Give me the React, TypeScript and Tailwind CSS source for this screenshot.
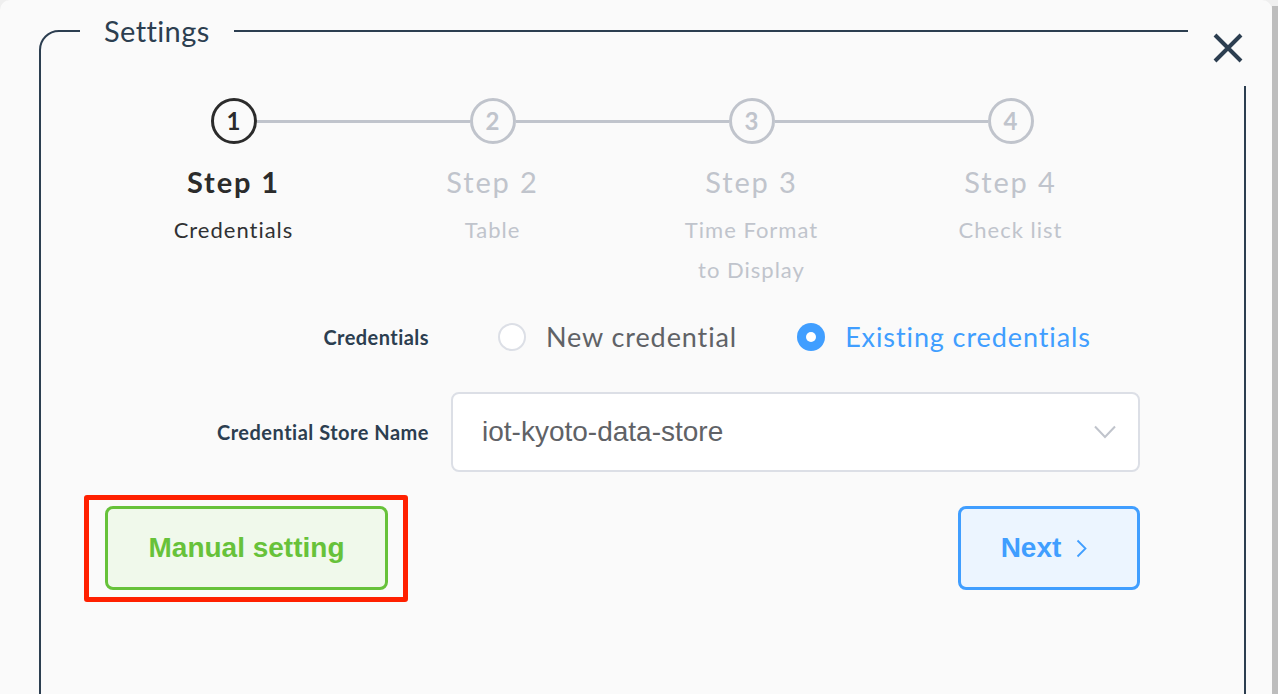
import React, { useState } from 'react';

type Step = { no: number; title: string; desc: string[] };

const steps: Step[] = [
  { no: 1, title: 'Step 1', desc: ['Credentials'] },
  { no: 2, title: 'Step 2', desc: ['Table'] },
  { no: 3, title: 'Step 3', desc: ['Time Format', 'to Display'] },
  { no: 4, title: 'Step 4', desc: ['Check list'] },
];

const avenir = "font-['Lato','Noto_Sans',sans-serif]";
const helvetica = "font-['Liberation_Sans',Arial,sans-serif]";

const Stepper: React.FC<{ active: number }> = ({ active }) => (
  <div className="flex">
    {steps.map((s, i) => {
      const on = s.no === active;
      return (
        <div key={s.no} className="w-[259px] flex flex-col items-center">
          <div className="w-full h-[46px] flex items-center">
            <div className={`flex-1 h-[3px] ${i === 0 ? '' : 'bg-[#c0c4cc]'}`} />
            <div
              className={`w-[46px] h-[46px] rounded-full border-[3px] flex items-center justify-center text-[24px] font-bold bg-[#fafafa] ${
                on ? 'border-[#2b2b2b] text-[#2b2b2b]' : 'border-[#c0c4cc] text-[#c0c4cc]'
              }`}
            >
              {s.no}
            </div>
            <div className={`flex-1 h-[3px] ${i === steps.length - 1 ? '' : 'bg-[#c0c4cc]'}`} />
          </div>
          <div
            className={`mt-[18px] text-[29px] leading-[40px] tracking-[1.9px] ${
              on ? 'font-bold text-[#2b2b2b]' : 'font-normal text-[#c0c4cc]'
            }`}
          >
            {s.title}
          </div>
          <div
            className={`mt-[8px] text-[22px] leading-[40px] tracking-[1px] text-center ${
              on ? 'text-[#303133]' : 'text-[#c0c4cc]'
            }`}
          >
            {s.desc.map(d => (
              <div key={d}>{d}</div>
            ))}
          </div>
        </div>
      );
    })}
  </div>
);

const Radio: React.FC<{ label: string; checked: boolean; onClick: () => void }> = ({ label, checked, onClick }) => (
  <button type="button" onClick={onClick} className="flex items-center gap-[20px]">
    <span
      className={`w-[28px] h-[28px] rounded-full flex items-center justify-center ${
        checked ? 'bg-[#409eff]' : 'bg-white border-2 border-[#dcdfe6]'
      }`}
    >
      {checked && <span className="w-[10px] h-[10px] rounded-full bg-white" />}
    </span>
    <span className={`text-[27px] leading-[40px] tracking-[0.9px] ${checked ? 'text-[#409eff]' : 'text-[#606266]'}`}>
      {label}
    </span>
  </button>
);

export default function App() {
  const [mode, setMode] = useState<'new' | 'existing'>('existing');

  return (
    <div className={`h-[694px] overflow-hidden flex bg-[#efefef] ${avenir}`}>
      <div className="relative flex-1 h-full bg-[#fafafa] rounded-t-[10px] pt-[15px] pl-[39px] pr-[26px]">
        <fieldset className="border-2 border-[#2c3e50] rounded-tl-[20px] h-[720px]">
          <legend className="ml-[39px] px-[24px] text-[29px] leading-[32px] tracking-[0.4px] text-[#2c3e50]">
            Settings
          </legend>

          <div className="ml-[63px] w-[1036px] pt-[51px]">
            <Stepper active={1} />

            <div className="mt-[27px] flex items-center">
              <div className="w-[347px] pr-[22px] text-right text-[20px] tracking-[0.45px] font-bold text-[#2c3e50]">
                Credentials
              </div>
              <div className="ml-[47px] flex items-center gap-[60px]">
                <Radio label="New credential" checked={mode === 'new'} onClick={() => setMode('new')} />
                <Radio label="Existing credentials" checked={mode === 'existing'} onClick={() => setMode('existing')} />
              </div>
            </div>

            <div className="mt-[35px] flex items-center">
              <div className="w-[347px] pr-[22px] text-right text-[20px] tracking-[0.5px] font-bold text-[#2c3e50]">
                Credential Store Name
              </div>
              <div className="flex-1 h-[80px] bg-white border-2 border-[#dcdfe6] rounded-[8px] flex items-center justify-between pl-[29px] pr-[22px]">
                <span className={`text-[28px] text-[#606266] ${helvetica}`}>iot-kyoto-data-store</span>
                <svg width="22" height="14" viewBox="0 0 22 14" fill="none">
                  <path d="M1 1.5 L11 12 L21 1.5" stroke="#c0c4cc" strokeWidth="2" />
                </svg>
              </div>
            </div>

            <div className={`mt-[34px] flex justify-between ${helvetica}`}>
              <div className="relative ml-[1px]">
                <button
                  type="button"
                  className="w-[283px] h-[84px] rounded-[8px] border-[3px] border-[#67c23a] bg-[#f0f9eb] text-[#67c23a] text-[28px] font-bold"
                >
                  Manual setting
                </button>
                <span className="absolute -left-[21px] -right-[20px] -top-[11px] -bottom-[12px] border-[5px] border-[#ff2000] rounded-[3px] pointer-events-none" />
              </div>
              <button
                type="button"
                className="w-[182px] h-[84px] rounded-[8px] border-[3px] border-[#409eff] bg-[#ecf5ff] text-[#409eff] text-[28px] font-bold flex items-center justify-center gap-[15px] pr-[10px]"
              >
                Next
                <svg width="11" height="19" viewBox="0 0 11 19" fill="none">
                  <path d="M1.5 1.5 L9.5 9.5 L1.5 17.5" stroke="#409eff" strokeWidth="1.8" />
                </svg>
              </button>
            </div>
          </div>
        </fieldset>

        <div className="absolute left-[1188px] top-[16px] w-[62px] h-[70px] bg-[#fafafa] pl-[25px] pt-[17px]">
          <svg width="30" height="30" viewBox="0 0 30 30" fill="none">
            <path d="M2 2 L28 28 M28 2 L2 28" stroke="#2c3e50" strokeWidth="4" />
          </svg>
        </div>
      </div>
      <div className="w-[6px] h-full bg-[#bdbdbd] mt-[6px]" />
    </div>
  );
}
